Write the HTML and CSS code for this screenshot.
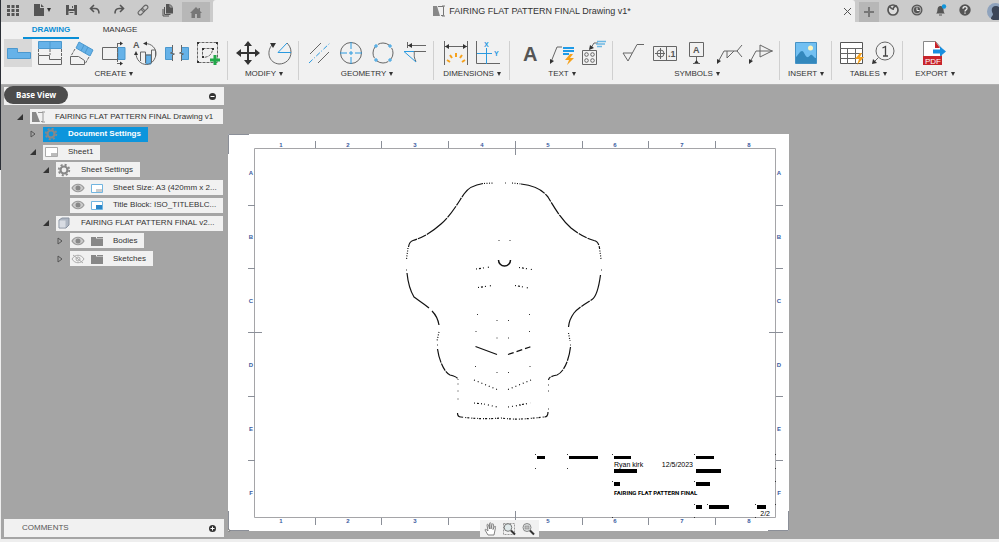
FILE: index.html
```html
<!DOCTYPE html>
<html lang="en">
<head>
    <meta charset="UTF-8">
    <meta name="viewport" content="width=device-width, initial-scale=1.0">
    <title>FAIRING FLAT PATTERN FINAL Drawing v1*</title>
    <link rel="stylesheet" href="styles.css">
</head>
<body>
    <!-- Top bar -->
    <header class="topbar">
        <button class="tool" aria-label="Data panel"><svg width="12" height="12" viewBox="0 0 12 12" fill="#555"><path d="M0 1h3v3H0zM4.5 1h3v3h-3zM9 1h3v3H9zM0 5h3v3H0zM4.500 5h3v3h-3zM9 5h3v3H9zM0 9h3v3H0zM4.500 9h3v3h-3zM9 9h3v3H9z"/></svg></button>
        <button class="tool file" aria-label="File"><svg width="10" height="12" viewBox="0 0 10 12" fill="#555"><path d="M0 0h6v4h4v8H0z"/><path d="M7 0l3 3H7z"/></svg><span class="caret"></span></button>
        <button class="tool" aria-label="Save"><svg width="11" height="12" viewBox="0 0 11 12"><path d="M0 1h11v10H0z" fill="#555"/><path d="M3 1h5v4H3zM2.500 7h6v4h-6z" fill="#ccc"/><path d="M6 2h1v2H6zM3.500 8h4v1h-4z" fill="#555"/></svg></button>
        <button class="tool" aria-label="Undo"><svg width="12" height="12" viewBox="0 0 12 12" fill="none" stroke="#555" stroke-width="1.6"><path d="M5 1L1.500 4.500 5 8M1.500 4.500H6c3 0 4 2 4 5"/></svg></button>
        <button class="tool" aria-label="Redo"><svg width="12" height="12" viewBox="0 0 12 12" fill="none" stroke="#555" stroke-width="1.6"><path d="M7 1l3.500 3.500L7 8M10.500 4.500H6c-3 0-4 2-4 5"/></svg></button>
        <button class="tool" aria-label="Link"><svg width="12" height="12" viewBox="0 0 12 12" fill="none" stroke="#666" stroke-width="1.1"><g transform="rotate(-45 6 6)"><rect x="0" y="4" width="7" height="4" rx="2"/><rect x="5" y="4" width="7" height="4" rx="2"/></g></svg></button>
        <button class="tool" aria-label="Copy"><svg width="11" height="13" viewBox="0 0 11 13"><path d="M1 5v7h6M2.500 3v7.500h6" fill="none" stroke="#555"/><path d="M4 0h4l3 3v6.500H4z" fill="#555"/><path d="M8 0v3h3" fill="none" stroke="#ccc" stroke-width=".7"/></svg></button>
        <button class="home-tab" aria-label="Home"><svg width="12" height="11" viewBox="0 0 12 11" fill="#777"><path d="M6 0L0 6h1.500v5h3.500V7h2v4h3.500V6H12L10 4V1H8.500v1.500z"/></svg></button>
        <div class="doc-tab">
            <h1 class="doc-title"><svg width="12" height="12" viewBox="0 0 12 12"><path d="M0 1h4l3 10H0z" fill="#888"/><path d="M5 1.500h5.500v9H8M9 1h3M9 11h3" fill="none" stroke="#777"/></svg>FAIRING FLAT PATTERN FINAL Drawing v1*</h1>
            <button class="close" aria-label="Close"><svg width="7" height="7" viewBox="0 0 7 7" stroke="#555"><path d="M0 0l7 7M7 0L0 7"/></svg></button>
        </div>
        <button class="new-tab" aria-label="New tab"><svg width="10" height="10" viewBox="0 0 10 10" stroke="#777" stroke-width="2"><path d="M5 0v10M0 5h10"/></svg></button>
        <button class="tool" aria-label="Extensions"><svg width="12" height="12" viewBox="0 0 12 12"><circle cx="6" cy="6" r="5" fill="#ddd" stroke="#555" stroke-width="1.700"/><path d="M2 2l3 3M6 6c0-3 2-4 4-4" fill="none" stroke="#555" stroke-width="1.700"/></svg></button>
        <button class="tool" aria-label="Job status"><svg width="12" height="12" viewBox="0 0 12 12"><circle cx="6" cy="6" r="5.500" fill="#555"/><circle cx="6" cy="6" r="3.800" fill="#555" stroke="#ccc" stroke-width=".8"/><path d="M6 3.500V6.500h2.500" fill="none" stroke="#eee"/></svg></button>
        <button class="tool" aria-label="Notifications"><svg width="12" height="12" viewBox="0 0 12 12"><path d="M1 9.500c2-1.500 1-4 2-6 1-2 4-2 5 0s0 4.500 2 6zM4 10.500h3v1H4z" fill="#555"/><circle cx="9" cy="2.500" r="2.200" fill="#1296db"/></svg></button>
        <button class="tool" aria-label="Help"><svg width="12" height="12" viewBox="0 0 12 12"><circle cx="6" cy="6" r="5.700" fill="#555"/><path d="M4 4.700C4 2 8 2 8 4.400 8 6 6 5.700 6 7.400M6 8.500v1.300" fill="none" stroke="#eee" stroke-width="1.300"/></svg></button>
        <button class="avatar" aria-label="Account"><svg width="17" height="17" viewBox="0 0 17 17"><circle cx="8.500" cy="8.500" r="8.500" fill="#8fa3bd"/><path d="M4 16c0-3 2-3 2-5-2-3-2-8 3-8s5 5 3 8l3 4c-3 3-8 3-11 1z" fill="#3c4658"/></svg></button>
    </header>

    <!-- Ribbon -->
    <nav class="modes">
        <button class="mode active">DRAWING</button>
        <button class="mode">MANAGE</button>
    </nav>
    <div class="ribbon">
        <section class="group">
            <div class="icons">
                <button class="icon selected" aria-label="Base View"><svg viewBox="0 0 28 28"><path class="blue" d="M3.500 9.500h10v4h13v6h-23z"/></svg></button>
                <button class="icon" aria-label="Projected View"><svg viewBox="0 0 28 28"><path class="blue" d="M2.500 2.500h23v7h-23z"/><path class="blue" d="M14 2.500v7"/><path class="line" d="M2.500 16.500h11v4h12v5h-23z"/><path class="line" stroke-dasharray="3 1" d="M2.500 10v6M14 10v6M25.500 10v10"/></svg></button>
                <button class="icon" aria-label="Auxiliary View"><svg viewBox="0 0 28 28"><path class="blue" d="M11 3l14 8-3 6-14-8zM16 6l-3 6M20 8l-3 6"/><path class="line" d="M2.500 25.500v-8h8l6 4v4z"/><path class="line" stroke-dasharray="3 1" d="M7 10l-4 7M21 18l-4 7"/></svg></button>
                <button class="icon" aria-label="Section View"><svg viewBox="0 0 28 28"><path class="line" d="M2.500 8.500h15v12h-15z"/><path class="blue" d="M18 8.500h7v12h-7z"/><path class="line" stroke-dasharray="4 1" d="M17.500 4v21"/><path class="line" d="M17 4.500h5M17 24.500h5"/><path class="dark" d="M20 2.500l3 2-3 2zM20 22.500l3 2-3 2z"/></svg></button>
                <button class="icon" aria-label="Detail View"><svg viewBox="0 0 28 28"><path class="blue" d="M14 16h5v9h-5z"/><path class="line" d="M8.500 22v-9h5v11M19.500 24v-8h-6M19.500 18v-7h4v7M13 4.500c7 0 11 5 11 10s-4 11-9.500 11S4 21 4 14"/><path class="dark" d="M15 2.500l-4 2 4 2zM2 16l2-4 2 4z"/><text class="bold-letter" x="1" y="9">A</text></svg></button>
                <button class="icon" aria-label="Break View"><svg viewBox="0 0 28 28"><path class="blue" d="M1.500 8.500h7v12h-7zM17.500 8.500h7v12h-7z"/><path fill="#f1f1f1" d="M9 8h8v13H9z"/><path class="line" d="M8.500 6v7l-2 1 4 1-2 1v6M17.500 6v7l-2 1 4 1-2 1v6"/></svg></button>
                <button class="icon" aria-label="Create Sketch"><svg viewBox="0 0 28 28"><path class="line" stroke-dasharray="3 1" d="M1.500 3.500h20v20h-20z"/><path class="line" stroke-dasharray="3 1" d="M6.500 9.500h10c0 6-4 9-10 9z"/><path class="dark" d="M1 3h2v2H1zM20 3h2v2h-2zM1 22h2v2H1zM6 9h2v2H6zM16 9h2v2h-2zM6 17h2v2H6z"/><path d="M19 16v10M14 21h10" stroke="#21a849" stroke-width="3"/></svg></button>
            </div>
            <button class="menu">CREATE<span class="caret"></span></button>
        </section>
        <section class="group">
            <div class="icons">
                <button class="icon" aria-label="Move"><svg viewBox="0 0 28 28"><path d="M14 5v18M5 14h18" stroke="#333" stroke-width="2"/><path class="dark" d="M14 2l4 5h-8zM14 26l4-5h-8zM2 14l5-4v8zM26 14l-5-4v8z"/></svg></button>
                <button class="icon" aria-label="Rotate"><svg viewBox="0 0 28 28"><path class="line" d="M6 6C0 13 3 24 13 25c7 0 12-5 12-12 0-4-2-7-4-9"/><path class="accent" d="M12 13.500L21 4M12 13.500h13"/><path class="dark" d="M4 4h6L7 9z"/></svg></button>
            </div>
            <button class="menu">MODIFY<span class="caret"></span></button>
        </section>
        <section class="group">
            <div class="icons">
                <button class="icon" aria-label="Centerline"><svg viewBox="0 0 28 28"><path class="line" d="M5 15L16 4M13 24l11-11"/><path class="accent" stroke-dasharray="5 2 1 2" d="M4 24L25 4"/></svg></button>
                <button class="icon" aria-label="Center Mark"><svg viewBox="0 0 28 28"><circle class="line" cx="14" cy="14" r="10.500"/><path class="accent" stroke-dasharray="7 2" d="M14 3v7M14 12v4M14 18v8M3 14h7M12 14h4M18 14h8"/></svg></button>
                <button class="icon" aria-label="Center Mark Pattern"><svg viewBox="0 0 28 28"><circle class="line" cx="14" cy="14" r="10" stroke-dasharray="12 3.700" stroke-dashoffset="-10"/><path class="accent" d="M5 7h4M7 5v4M19 7h4M21 5v4M5 21h4M7 19v4M19 21h4M21 19v4"/></svg></button>
                <button class="icon" aria-label="Edge Extension"><svg viewBox="0 0 28 28"><path class="line" d="M6.500 3v6M6.500 6.500H25M25 12.500H13c1 4-1 4 2 10"/><path class="dark" d="M7 6.500L11 4v5z"/><path class="accent" d="M3 12.500h10M3 12.500L15 23"/></svg></button>
            </div>
            <button class="menu">GEOMETRY<span class="caret"></span></button>
        </section>
        <section class="group roomy">
            <div class="icons">
                <button class="icon" aria-label="Dimension"><svg viewBox="0 0 28 28"><path class="line" d="M2.500 2v24M25.500 2v24M3 7.500h22"/><path class="dark" d="M3 7.500L7 5v5zM25 7.500L21 5v5z"/><path d="M14 14v4M8 16l2 3M20 16l-2 3M5 21l3 2M23 21l-3 2" stroke="#f5a11c" stroke-width="2"/></svg></button>
                <button class="icon" aria-label="Ordinate Dimension"><svg viewBox="0 0 28 28"><path class="line" d="M2.500 2v22.500H26"/><path class="accent" d="M3 14.500h15M12.500 9v16"/><text class="axis" x="10" y="8">X</text><text class="axis" x="20" y="17">Y</text></svg></button>
            </div>
            <button class="menu">DIMENSIONS<span class="caret"></span></button>
        </section>
        <section class="group">
            <div class="icons">
                <button class="icon" aria-label="Text"><svg viewBox="0 0 28 28"><text class="big-letter" x="7" y="22">A</text></svg></button>
                <button class="icon" aria-label="Leader Text"><svg viewBox="0 0 28 28"><path class="line" d="M3 23l6-15h5"/><path class="dark" d="M2 25l0-5 4 2z"/><path d="M15 9h11M15 12h11M15 15h6" stroke="#1e9be8" stroke-width="2"/><path d="M22 15l-5 6h4l-2 5 7-7h-4l3-4z" fill="#f5a11c"/></svg></button>
                <button class="icon" aria-label="Hole and Thread Note"><svg viewBox="0 0 28 28"><path class="line" d="M2.500 11.500h14v14h-14zM11 9l3-5h4"/><path class="dark" d="M9 11l1-5 4 3z"/><circle class="line" cx="6.500" cy="15.500" r="1.800"/><circle class="line" cx="12.500" cy="15.500" r="1.800"/><circle class="line" cx="6.500" cy="21.500" r="1.800"/><circle class="line" cx="12.500" cy="21.500" r="1.800"/><path d="M17 2.500h9M16 5h9M17 7.500h5" stroke="#6cb8e4" stroke-width="1.500"/></svg></button>
            </div>
            <button class="menu">TEXT<span class="caret"></span></button>
        </section>
        <section class="group">
            <div class="icons">
                <button class="icon" aria-label="Surface Texture"><svg viewBox="0 0 28 28"><path class="line" d="M13 14H4l5 8L18 5.500h7"/></svg></button>
                <button class="icon" aria-label="Feature Control Frame"><svg viewBox="0 0 28 28"><path class="line" d="M2.500 7.500h23v14h-23zM15.500 7.500v14M4 14.500h10M9.500 9v11"/><circle class="line" cx="9.500" cy="14.500" r="3.500"/><text class="letter" x="17" y="18">.1</text></svg></button>
                <button class="icon" aria-label="Datum Identifier"><svg viewBox="0 0 28 28"><path class="line" d="M6.500 3.500h14v14h-14zM13.500 18v5"/><path class="dark" d="M11 24.500l2.500-3.500 2.500 3.500z"/><path class="line" d="M10 24.500h7"/><text class="letter" x="10" y="14">A</text></svg></button>
                <button class="icon" aria-label="Welding"><svg viewBox="0 0 28 28"><path class="line" d="M3 23l6-11h14M12 12v7l7-7M27 6l-5 6 5 6"/><path class="dark" d="M2 25v-5l4 2z"/></svg></button>
                <button class="icon" aria-label="Taper and Slope"><svg viewBox="0 0 28 28"><path class="line" d="M3 23l6-11h17M13 6v12l12-6z"/><path class="dark" d="M2 25v-5l4 2z"/></svg></button>
            </div>
            <button class="menu">SYMBOLS<span class="caret"></span></button>
        </section>
        <section class="group roomy">
            <div class="icons">
                <button class="icon" aria-label="Insert Image"><svg viewBox="0 0 28 28"><path fill="#72c0f2" stroke="#4592c5" d="M3.500 3.500h21v21h-21z"/><circle cx="18.500" cy="9" r="2.500" fill="#fff5bd"/><path fill="#3388bd" d="M4 18c3-3 4-6 6-6s3 5 5 6 3-3 5-2 2 3 4 3v5H4z"/></svg></button>
            </div>
            <button class="menu">INSERT<span class="caret"></span></button>
        </section>
        <section class="group">
            <div class="icons">
                <button class="icon" aria-label="Table"><svg viewBox="0 0 28 28"><path fill="#fff" stroke="#555" d="M2.500 3.500h22v21h-22z"/><path class="line" d="M2 9.500h23M2 14.500h23M2 19.500h23M9.500 10v15M17.500 10v15"/><path d="M22 14l-5 6h4l-2 6 7-8h-4l2-4z" fill="#f5a11c"/></svg></button>
                <button class="icon" aria-label="Balloon"><svg viewBox="0 0 28 28"><circle class="line" cx="15" cy="12" r="9"/><path class="line" d="M8.500 18.500L4 23"/><path class="dark" d="M2 25l1-5 4 4z"/><path d="M12.500 9L15.500 7.500V17M13 17h5" fill="none" stroke="#444" stroke-width="1.300"/></svg></button>
            </div>
            <button class="menu">TABLES<span class="caret"></span></button>
        </section>
        <section class="group last">
            <div class="icons">
                <button class="icon" aria-label="Export PDF"><svg viewBox="0 0 28 28"><path fill="#fff" stroke="#888" d="M2.500 2.500h12l6 7v16h-18z"/><path fill="#c8242b" d="M14 2l5 7h-5zM2 17h19v9H2z"/><text class="pdf" x="4" y="25">PDF</text><path fill="#188fe0" d="M12 10.500h7V7.500l6 5-6 5V14.500h-7z"/></svg></button>
            </div>
            <button class="menu">EXPORT<span class="caret"></span></button>
        </section>
    </div>

    <main class="workspace">
        <!-- Browser panel -->
        <aside class="browser">
            <div class="panel-head">
                <span class="tooltip">Base View</span>
                <button class="round" aria-label="Collapse"><svg width="7" height="7" viewBox="0 0 7 7"><circle cx="3.500" cy="3.500" r="3.500" fill="#333"/><path d="M1.500 3.500h4" stroke="#fff"/></svg></button>
            </div>
            <ul class="tree">
                <li class="row"><svg class="arrow" viewBox="0 0 6 8"><path d="M6 1v6H0z" fill="#333"/></svg><div class="node fill"><svg class="node-icon" viewBox="0 0 16 14"><path d="M2 2h4l4 10H2z" fill="#888"/><path d="M8 2.500h5v9h-2M12 2h3M12 12h3" fill="none" stroke="#999"/></svg><span class="name">FAIRING FLAT PATTERN FINAL Drawing v1</span></div></li>
                <li class="row level-1"><svg class="arrow" viewBox="0 0 6 8"><path d="M1 1l4 3-4 3z" fill="none" stroke="#555"/></svg><div class="node current"><svg class="node-icon" viewBox="0 0 16 14"><circle cx="8" cy="7" r="3.500" fill="none" stroke="#888" stroke-width="2.200"/><circle cx="8" cy="7" r="5.300" fill="none" stroke="#888" stroke-width="1.800" stroke-dasharray="2.080"/></svg><span class="name">Document Settings</span></div></li>
                <li class="row level-1"><svg class="arrow" viewBox="0 0 6 8"><path d="M6 1v6H0z" fill="#333"/></svg><div class="node"><svg class="node-icon" viewBox="0 0 16 14"><path d="M2.500 2.500h12v9h-12z" fill="#fff" stroke="#aaa"/><path d="M8 8h6v3H8z" fill="#bbb"/></svg><span class="name">Sheet1</span></div></li>
                <li class="row level-2"><svg class="arrow" viewBox="0 0 6 8"><path d="M6 1v6H0z" fill="#333"/></svg><div class="node"><svg class="node-icon" viewBox="0 0 16 14"><circle cx="8" cy="7" r="3.500" fill="none" stroke="#888" stroke-width="2.200"/><circle cx="8" cy="7" r="5.300" fill="none" stroke="#888" stroke-width="1.800" stroke-dasharray="2.080"/></svg><span class="name">Sheet Settings</span></div></li>
                <li class="row level-3"><div class="node fill"><svg class="eye" viewBox="0 0 16 14"><path d="M2 7c3-5 9-5 12 0-3 5-9 5-12 0z" fill="#ccc" stroke="#999" stroke-width="1.200"/><circle cx="8" cy="7" r="2.500" fill="#888"/></svg><svg class="node-icon" viewBox="0 0 16 14"><path d="M3.500 3.500h11v8h-11z" fill="#fff" stroke="#71b5e0"/><path d="M8 8h6v3H8z" fill="#ccc"/></svg><span class="name">Sheet Size: A3 (420mm x 2...</span></div></li>
                <li class="row level-3"><div class="node fill"><svg class="eye" viewBox="0 0 16 14"><path d="M2 7c3-5 9-5 12 0-3 5-9 5-12 0z" fill="#ccc" stroke="#999" stroke-width="1.200"/><circle cx="8" cy="7" r="2.500" fill="#888"/></svg><svg class="node-icon" viewBox="0 0 16 14"><path d="M3.500 3.500h11v8h-11z" fill="#fff" stroke="#71b5e0"/><path d="M8 7h6v4H8z" fill="#2a86c8"/></svg><span class="name">Title Block: ISO_TITLEBLC...</span></div></li>
                <li class="row level-2"><svg class="arrow" viewBox="0 0 6 8"><path d="M6 1v6H0z" fill="#333"/></svg><div class="node fill"><svg class="node-icon" viewBox="0 0 16 14"><path d="M3 4l3-2h7v7l-3 3H3z" fill="#aeb6c2" stroke="#8992a0"/><path d="M3.500 4.500h6v7h-6z" fill="#d8dce3"/></svg><span class="name">FAIRING FLAT PATTERN FINAL v2...</span></div></li>
                <li class="row level-3"><svg class="arrow" viewBox="0 0 6 8"><path d="M1 1l4 3-4 3z" fill="none" stroke="#555"/></svg><div class="node"><svg class="eye" viewBox="0 0 16 14"><path d="M2 7c3-5 9-5 12 0-3 5-9 5-12 0z" fill="#ccc" stroke="#999" stroke-width="1.200"/><circle cx="8" cy="7" r="2.500" fill="#888"/></svg><svg class="node-icon" viewBox="0 0 16 14"><path d="M3 3h5v1.500h7V12H3z" fill="#888"/><path d="M9 3.500h6" stroke="#888"/></svg><span class="name">Bodies</span></div></li>
                <li class="row level-3"><svg class="arrow" viewBox="0 0 6 8"><path d="M1 1l4 3-4 3z" fill="none" stroke="#555"/></svg><div class="node"><svg class="eye" viewBox="0 0 16 14"><path d="M2 7c3-5 9-5 12 0-3 5-9 5-12 0zM3 3l10 8" fill="none" stroke="#aaa"/><circle cx="8" cy="7" r="2" fill="none" stroke="#aaa"/></svg><svg class="node-icon" viewBox="0 0 16 14"><path d="M3 3h5v1.500h7V12H3z" fill="#888"/><path d="M9 3.500h6" stroke="#888"/></svg><span class="name">Sketches</span></div></li>
            </ul>
            <div class="comments">
                <span>COMMENTS</span>
                <button class="round" aria-label="Expand comments"><svg width="7" height="7" viewBox="0 0 7 7"><circle cx="3.500" cy="3.500" r="3.500" fill="#333"/><path d="M1.500 3.500h4M3.500 1.500v4" stroke="#fff"/></svg></button>
            </div>
        </aside>

        <!-- Drawing sheet -->
        <div class="canvas">
            <svg class="sheet" viewBox="228 134 562 398">
                <path d="M228 134h561v397H228z" fill="#fff"/>
                <path class="corner" d="M228.500 154v-19.500H249M788.500 511v19.500H768M228.500 511v19.500H249"/>
                <circle cx="228.500" cy="530.500" r="1.200" fill="#ddd" stroke="#555" stroke-width=".7"/>
                <path class="frame" d="M254.500 148.500h521v369h-521z"/>
                <path class="tick" d="M315.500 141v7M381.500 141v7M448.500 141v7M515.500 141v14M582.500 141v7M648.500 141v7M715.500 141v7M315.500 518v7M381.500 518v7M448.500 518v7M515.500 511v14M582.500 518v7M648.500 518v7M715.500 518v7"/>
                <path class="tick" d="M248 205.500h7M248 268.500h7M248 332.500h14M248 396.500h7M248 460.500h7M776 205.500h7M776 268.500h7M769 332.500h14M776 396.500h7M776 460.500h7"/>
                <g class="zone">
                    <text x="281" y="147">1</text><text x="348" y="147">2</text><text x="415" y="147">3</text><text x="482" y="147">4</text><text x="548" y="147">5</text><text x="615" y="147">6</text><text x="682" y="147">7</text><text x="749" y="147">8</text>
                    <text x="281" y="523">1</text><text x="348" y="523">2</text><text x="415" y="523">3</text><text x="548" y="523">5</text><text x="615" y="523">6</text><text x="682" y="523">7</text><text x="749" y="523">8</text>
                    <text x="251" y="175">A</text><text x="251" y="239">B</text><text x="251" y="303">C</text><text x="251" y="367">D</text><text x="251" y="431">E</text><text x="251" y="495">F</text>
                    <text x="779" y="175">A</text><text x="779" y="239">B</text><text x="779" y="303">C</text><text x="779" y="367">D</text><text x="779" y="431">E</text><text x="779" y="495">F</text>
                </g>

                <!-- fairing outline -->
                <g class="part">
                    <path d="M483 183.500C473 185 468 188 464 194 456 206 451 215 441 224 432 232 424 237 413 240.500 410 241.500 409 243 408.500 247" stroke-dasharray="26 1 9 1 14 1"/>
                    <path d="M407 273C408 283 411 292 414 297C418 300 423 303 429 308"/>
                    <path d="M432 311C435 314 438 319 439 325"/>
                    <path d="M437.500 349C439 360 444 372 450 375 454 376 458 377 458 380" stroke-dasharray="14 1 8 1"/>
                    <path d="M521 184C537 186 542 190 548 197 555 209 562 220 571 228 580 235 588 239 594 240.500 597 241 599 244 599.500 248" stroke-dasharray="26 1 9 1 14 1"/>
                    <path d="M600.500 275C599 286 596 297 592 299.500 585 304 578 308 574 313 571 317 569 321 568.500 327" stroke-dasharray="28 1 10 1"/>
                    <path d="M570.500 347C569 360 564 372 557 375 552 376 549 377 548.500 380" stroke-dasharray="14 1 8 1"/>
                    <path d="M457.500 413c0 3 1 4 3.500 4M548 412c0 3-1 5-3.500 5M475.500 346.500l21.500 8"/>
                    <path stroke-width="1.500" d="M498.500 260a6 6 0 0 0 12 0"/>
                    <path stroke-dasharray="6 3" d="M508 354.500l22-7.500"/>
                    <path stroke-dasharray="1 1.500" d="M484 183.500l10-.5M512 183l10 1M408 248l-1.500 11M599.500 248l1.500 11M439 332l-2 9M568.500 333l1.500 8"/>
                    <path stroke-dasharray="2 2 1 1" d="M461 417c15 2 28 2 40 1 15 2 25 1 43-1"/>
                    <path stroke-dasharray="1 2 2 2 1 4" d="M476 269l14-2M519 267.500l13 2M478 287.500l14-2M515 285.500l14 2.500M474 403l10 1M519 405l12-2"/>
                    <path stroke-dasharray="1 3" d="M474 380l23 9.500M508 389.500l23-9.500M484 404l13 3M508 407l13-2"/>
                </g>
                <path class="points" d="M505 183h1M498.500 240.500h1M509.500 240.500h1M406 270h1M601 270h1M477 314.500h1M529 314.500h1M496.500 320.500h1M508 320.500h1M475.500 331.500h1M529 331.500h1M496.500 338h1M508 338h1M437 345h1M570 345h1M529.500 347h1M475 366.500h1M529.500 366.500h1M496.500 372.500h1M508 372.500h1M457.500 384h1M457.500 391h1M457.500 399h1M548 385h1M548 391h1M548 409h1"/>

                <!-- title block -->
                <path d="M537 456h8v3h-8zM569 456h29v3h-29zM614 456h17v3h-17zM696 456h18v3h-18zM614 469h23v4h-23zM696 469h25v4h-25zM614 482h6v4h-6zM696 482h14v4h-14zM696 505h6v4h-6zM709 505h20v4h-20zM757 505h9v4h-9z"/>
                <path class="points" d="M535 454.500h1M567 454.500h1M612 454.500h1M694 454.500h1M535 468.500h1M567 468.500h1M612 481.500h1M694 481.500h1M694 504.500h1M707 504.500h1M755 504.500h1M612 517.500h1M694 517.500h1M755 517.500h1M775 454.500h1M775 468.500h1M775 481.500h1M775 504.500h1"/>
                <g class="block-text">
                    <text x="614" y="467">Ryan kirk</text>
                    <text x="693" y="467" text-anchor="end">12/5/2023</text>
                    <text x="770" y="516" text-anchor="end">2/2</text>
                </g>
                <text class="block-title" x="614" y="495">FAIRING FLAT PATTERN FINAL</text>
            </svg>
        </div>

        <div class="navbar">
            <button class="nav" aria-label="Pan"><svg width="13" height="14" viewBox="0 0 13 14"><path d="M4 13L1 8c0-1 1-1 3 1L3 3c0-1 1-1 1.500 0L5.500 7V1.500c0-1 1.500-1 1.500 0V7l1-4.500c0-1 1.500-1 1.500 0L9 7.500l1.500-3c.5-1 1.500 0 1 1L10 13z" fill="#fff" stroke="#777" stroke-width=".9"/></svg></button>
            <button class="nav" aria-label="Zoom window"><svg width="13" height="14" viewBox="0 0 13 14"><path d="M.5 1.500h11v11H.5z" fill="none" stroke="#999" stroke-dasharray="2 1"/><circle cx="5" cy="5.500" r="3.800" fill="#dfe9ea" stroke="#777"/><path d="M8 8.500l4 4" stroke="#333" stroke-width="2"/></svg></button>
            <button class="nav" aria-label="Fit"><svg width="13" height="14" viewBox="0 0 13 14"><circle cx="5" cy="5.500" r="4" fill="#dfe2e2" stroke="#888"/><path d="M3 4h4v3H3z" fill="#bbb" stroke="#888" stroke-width=".6"/><path d="M8 8.500l4 4" stroke="#333" stroke-width="2"/></svg></button>
        </div>
    </main>
</body>
</html>
```
FILE: styles.css
```css
* {
    box-sizing: border-box;
}

body {
    display: flex;
    flex-direction: column;
    height: 100vh;
    margin: 0;
    padding: 0 0 3px 1px;
    overflow: hidden;
    font: 8px/12px "Liberation Sans", Arial, sans-serif;
    color: #333;
    background: linear-gradient(#2b2f36 170px, #eee 170px);
}

button {
    display: flex;
    align-items: center;
    justify-content: center;
    padding: 0;
    border: 0;
    background: none;
    font: inherit;
    color: inherit;
    cursor: pointer;
}

svg {
    display: block;
    flex: none;
}

.caret {
    border: 2px solid transparent;
    border-top: 4px solid #333;
    border-bottom: 0;
    margin-left: 3px;
}

/* Top bar */
.topbar {
    display: flex;
    flex: none;
    height: 22px;
    background: #cbcbcb;
}

.tool {
    width: 24px;
    height: 20px;
}

.tool.file {
    width: 34px;
}

.home-tab {
    width: 28px;
    margin: 2px 3px 0 3px;
    background: #b7b7b7;
}

.doc-tab {
    display: flex;
    flex: 1;
    align-items: center;
    padding: 0 4px 0 8px;
    border-radius: 3px 3px 0 0;
    background: #f1f1f1;
}

.doc-title {
    display: flex;
    flex: 1;
    gap: 4px;
    align-items: center;
    justify-content: center;
    margin: 0;
    font-size: 9px;
    font-weight: normal;
}

.close {
    width: 8px;
    height: 16px;
}

.new-tab {
    width: 20px;
    margin: 2px 2px 0 4px;
    background: #b7b7b7;
}

.avatar {
    justify-content: flex-start;
    width: 22px;
    padding-left: 10px;
    overflow: hidden;
}

/* Ribbon */
.modes {
    display: flex;
    flex: none;
    gap: 13px;
    height: 17px;
    padding-left: 22px;
    background: #f1f1f1;
}

.mode {
    width: 56px;
    border-bottom: 2px solid transparent;
}

.mode.active {
    border-color: #0a8fd6;
    font-weight: bold;
    color: #0a8fd6;
}

.ribbon {
    display: flex;
    flex: none;
    height: 46px;
    padding: 0 0 4px 3px;
    border-bottom: 1px solid #b0b0b0;
    background: #f1f1f1;
}

.group {
    position: relative;
    display: flex;
    flex-direction: column;
    align-items: center;
    padding: 0 5px 0 6px;
}

.group:first-child {
    padding: 0 4px 0 0;
}

.group.roomy {
    padding: 0 8px;
}

.group.last {
    padding-left: 12px;
}

.group::after {
    content: "";
    position: absolute;
    top: 2px;
    right: 0;
    bottom: 0;
    border-right: 1px solid #d0d0d0;
}

.group.last::after {
    display: none;
}

.icons {
    display: flex;
    gap: 4px;
}

.icon {
    width: 28px;
    height: 28px;
}

.icon svg {
    width: 28px;
    height: 28px;
}

.icon.selected {
    background: #d8d8d8;
}

.menu {
    height: 14px;
    white-space: nowrap;
}

.line {
    fill: none;
    stroke: #666;
}

.dark {
    fill: #333;
}

.blue {
    fill: #66b2e8;
    stroke: #4b98ce;
}

.accent {
    fill: none;
    stroke: #2a9ae0;
}

.bold-letter,
.letter {
    font-size: 9px;
    font-weight: bold;
    fill: #555;
}

.big-letter {
    font-size: 20px;
    font-weight: bold;
    fill: #555;
}

.axis {
    font-size: 7px;
    font-weight: bold;
    fill: #2a9ae0;
}

.pdf {
    font-size: 8px;
    fill: #fff;
}

/* Workspace */
.workspace {
    position: relative;
    display: flex;
    flex: 1;
    min-height: 0;
    background: #a5a5a5;
}

.browser {
    display: flex;
    flex: none;
    flex-direction: column;
    width: 223px;
    padding: 2px 0 2px 3px;
}

.panel-head,
.comments {
    position: relative;
    display: flex;
    align-items: center;
    justify-content: flex-end;
    height: 18px;
    padding-right: 8px;
    background: #f1f1f1;
}

.comments {
    justify-content: space-between;
    margin-top: auto;
    padding-left: 18px;
    color: #555;
}

/* lies over the panel header */
.tooltip {
    position: absolute;
    top: -1px;
    left: 0;
    padding: 0 12px;
    border-radius: 9px;
    background: #4c4c4c;
    font: bold 8px/18px "Open Sans", sans-serif;
    color: #fff;
}

.tree {
    display: flex;
    flex-direction: column;
    justify-content: space-between;
    height: 157px;
    margin: 4px 1px 0 0;
    padding: 0 0 0 10px;
    list-style: none;
}

.row {
    display: flex;
    align-items: center;
    justify-content: flex-start;
    padding-left: 16px;
}

.level-1 {
    padding-left: 29px;
}

.level-2 {
    padding-left: 42px;
}

.level-3 {
    padding-left: 56px;
}

.arrow {
    width: 6px;
    height: 8px;
    margin: 0 7px 0 -13px;
}

.node {
    display: flex;
    align-items: center;
    height: 15px;
    padding-right: 7px;
    background: #f1f1f1;
    white-space: nowrap;
}

.node.fill {
    flex: 1;
    padding-right: 0;
}

.node.current {
    background: #0d95dc;
    font-weight: bold;
    color: #fff;
}

.node-icon,
.eye {
    width: 16px;
    height: 14px;
}

.eye {
    margin-right: 2px;
}

.name {
    padding-left: 9px;
}

/* Drawing sheet */
.canvas {
    flex: 1;
    padding: 49px 209px 0 4px;
}

.sheet {
    width: 100%;
}

.corner,
.frame,
.tick {
    fill: none;
    stroke: #8b8f98;
}

.frame {
    stroke: #a5a5a8;
}

.zone {
    font-size: 6px;
    font-weight: bold;
    text-anchor: middle;
    fill: #3a5ba0;
}

.part {
    fill: none;
    stroke: #111;
    stroke-width: 1.2px;
}

.points {
    stroke: #333;
}

.block-text {
    font-size: 7px;
}

.block-title {
    font: bold 6px Roboto, "Liberation Sans", sans-serif;
}

/* View controls, over the bottom of the sheet */
.navbar {
    position: absolute;
    bottom: 2px;
    left: 48%;
    display: flex;
    padding: 0 1px;
    background: #f1f1f1;
}

.nav {
    width: 19px;
    height: 17px;
}
```
